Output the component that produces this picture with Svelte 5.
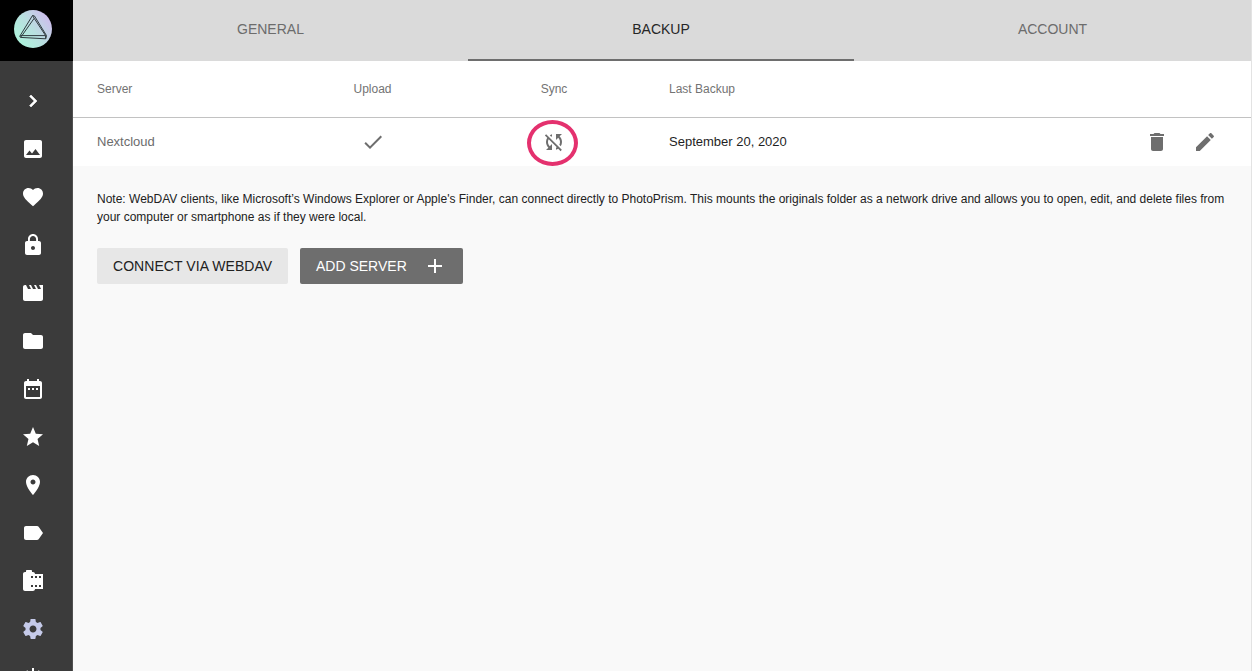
<script>
  const nav = [
    { name: 'expand', bold: true, d: 'M10 6L8.59 7.41 13.17 12l-4.58 4.59L10 18l6-6z' },
    { name: 'photos', d: 'M21 19V5c0-1.1-.9-2-2-2H5c-1.1 0-2 .9-2 2v14c0 1.1.9 2 2 2h14c1.1 0 2-.9 2-2zM8.5 13.5l2.5 3.01L14.500 12l4.500 6H5l3.500-4.500z' },
    { name: 'favorites', d: 'M12 21.350l-1.450-1.320C5.400 15.360 2 12.280 2 8.500 2 5.420 4.420 3 7.500 3c1.740 0 3.410.810 4.500 2.090C13.090 3.810 14.760 3 16.500 3 19.580 3 22 5.420 22 8.500c0 3.780-3.400 6.860-8.550 11.540L12 21.350z' },
    { name: 'private', d: 'M18 8h-1V6c0-2.760-2.240-5-5-5S7 3.240 7 6v2H6c-1.100 0-2 .9-2 2v10c0 1.100.9 2 2 2h12c1.100 0 2-.9 2-2V10c0-1.100-.9-2-2-2zm-6 9c-1.100 0-2-.9-2-2s.9-2 2-2 2 .9 2 2-.9 2-2 2zm3.100-9H8.900V6c0-1.710 1.390-3.100 3.100-3.100s3.100 1.390 3.100 3.100v2z' },
    { name: 'videos', d: 'M18 4l2 4h-3l-2-4h-2l2 4h-3l-2-4H8l2 4H7L5 4H4c-1.100 0-1.990.9-1.990 2L2 18c0 1.100.9 2 2 2h16c1.100 0 2-.9 2-2V4h-4z' },
    { name: 'folders', d: 'M10 4H4c-1.100 0-1.990.9-1.990 2L2 18c0 1.100.9 2 2 2h16c1.100 0 2-.9 2-2V8c0-1.100-.9-2-2-2h-8l-2-2z' },
    { name: 'calendar', d: 'M9 11H7v2h2v-2zm4 0h-2v2h2v-2zm4 0h-2v2h2v-2zm2-7h-1V2h-2v2H8V2H6v2H5c-1.110 0-1.990.9-1.990 2L3 20c0 1.100.890 2 2 2h14c1.100 0 2-.9 2-2V6c0-1.100-.9-2-2-2zm0 16H5V9h14v11z' },
    { name: 'moments', d: 'M12 17.270L18.180 21l-1.640-7.030L22 9.240l-7.190-.610L12 2 9.190 8.630 2 9.240l5.460 4.730L5.820 21z' },
    { name: 'places', d: 'M12 2C8.130 2 5 5.130 5 9c0 5.250 7 13 7 13s7-7.750 7-13c0-3.870-3.130-7-7-7zm0 9.500c-1.380 0-2.500-1.120-2.500-2.500s1.120-2.500 2.500-2.500 2.500 1.120 2.500 2.500-1.120 2.500-2.500 2.500z' },
    { name: 'labels', d: 'M17.630 5.840C17.270 5.330 16.670 5 16 5L5 5.010C3.900 5.010 3 5.900 3 7v10c0 1.100.9 1.990 2 1.990L16 19c.670 0 1.270-.330 1.630-.840L22 12l-4.370-6.160z' },
    { name: 'originals', d: 'M14 5c0-1.100-.9-2-2-2h-1V2c0-.550-.450-1-1-1H6c-.550 0-1 .450-1 1v1H4c-1.100 0-2 .9-2 2v15c0 1.100.9 2 2 2h8c1.100 0 2-.9 2-2h8V5h-8zm-2 13h-2v-2h2v2zm0-9h-2V7h2v2zm4 9h-2v-2h2v2zm0-9h-2V7h2v2zm4 9h-2v-2h2v2zm0-9h-2V7h2v2z' },
    { name: 'settings', active: true, d: 'M19.430 12.980c.040-.320.070-.640.070-.980s-.030-.660-.070-.980l2.110-1.650c.190-.150.240-.420.120-.640l-2-3.460c-.120-.220-.390-.300-.610-.220l-2.490 1c-.520-.400-1.080-.730-1.690-.980l-.380-2.650C14.460 2.180 14.250 2 14 2h-4c-.250 0-.460.180-.490.420l-.380 2.650c-.610.250-1.170.590-1.690.980l-2.490-1c-.230-.090-.490 0-.610.220l-2 3.460c-.130.220-.070.490.120.640l2.110 1.650c-.040.320-.070.650-.070.980s.030.660.070.980l-2.110 1.650c-.190.150-.240.420-.120.640l2 3.460c.120.220.390.300.610.220l2.490-1c.520.400 1.080.730 1.690.980l.380 2.650c.030.240.240.420.490.420h4c.250 0 .460-.180.490-.420l.380-2.650c.610-.250 1.170-.590 1.690-.980l2.490 1c.230.090.490 0 .610-.220l2-3.460c.120-.220.070-.490-.120-.640l-2.110-1.650zM12 15.500c-1.930 0-3.500-1.570-3.500-3.500s1.570-3.500 3.500-3.500 3.500 1.570 3.500 3.500-1.570 3.500-3.500 3.500z' },
    { name: 'logout', d: 'M13 3h-2v10h2V3zm4.830 2.170l-1.420 1.420C17.990 7.860 19 9.810 19 12c0 3.870-3.130 7-7 7s-7-3.130-7-7c0-2.190 1.010-4.140 2.580-5.420L6.170 5.170C4.230 6.820 3 9.260 3 12c0 4.970 4.030 9 9 9s9-4.030 9-9c0-2.740-1.230-5.180-3.170-6.830z' }
  ];
  const icons = {
    check: 'M9 16.170L4.830 12l-1.420 1.410L9 19 21 7l-1.410-1.410z',
    syncOff: 'M10 6.350V4.260c-.8.210-1.550.540-2.230.960l1.460 1.460c.250-.120.500-.240.770-.330zm-7.140-.940l2.360 2.360C4.450 8.990 4 10.440 4 12c0 2.210.910 4.200 2.360 5.640L4 20h6v-6l-2.240 2.240C6.680 15.150 6 13.660 6 12c0-1 .250-1.940.680-2.770l8.080 8.080c-.250.130-.500.250-.770.340v2.090c.8-.210 1.550-.540 2.230-.960l2.360 2.360 1.270-1.270L4.140 4.140 2.860 5.410zM20 4h-6v6l2.240-2.240C17.320 8.850 18 10.340 18 12c0 1-.250 1.940-.680 2.770l1.460 1.460C19.550 15.010 20 13.560 20 12c0-2.210-.910-4.200-2.360-5.640L20 4z',
    trash: 'M6 19c0 1.100.9 2 2 2h8c1.100 0 2-.9 2-2V7H6v12zM19 4h-3.500l-1-1h-5l-1 1H5v2h14V4z',
    edit: 'M3 17.250V21h3.750L17.810 9.940l-3.750-3.750L3 17.250zM20.710 7.040c.390-.390.390-1.020 0-1.410l-2.340-2.340c-.390-.390-1.020-.390-1.410 0l-1.830 1.830 3.750 3.750 1.830-1.830z',
    plus: 'M19 13h-6v6h-2v-6H5v-2h6V5h2v6h6v2z'
  };
</script>

{#snippet icon(d)}
  <svg width="24" height="24" viewBox="0 0 24 24" fill="currentColor"><path {d} /></svg>
{/snippet}

<div class="app">
  <aside>
    <div class="brand">
      <svg width="38" height="38" viewBox="0 0 38 38">
        <defs>
          <linearGradient id="logo" x1="0.1" y1="0.8" x2="0.9" y2="0.2">
            <stop offset="0" stop-color="#aef3dc" />
            <stop offset="0.5" stop-color="#b9dfe0" />
            <stop offset="1" stop-color="#cdbfec" />
          </linearGradient>
        </defs>
        <circle cx="19" cy="19" r="19" fill="url(#logo)" />
        <g fill="none" stroke="#303b40" stroke-width="1" stroke-linejoin="round">
          <path d="M18.500 5.500L5.800 26.200l2.300-.8L20.200 8.300zM20.200 8.300L31.600 25.600H8.100" />
          <path d="M18.500 5.500l1.900.4 12.100 19.700-.8 3.200-25.200-1.400-.7-1.200M31.700 28.800l-.1-3.200M8.100 25.400l-1.600 2" />
        </g>
      </svg>
    </div>
    <nav>
      {#each nav as item (item.name)}
        <div class="item" class:active={item.active} class:bold={item.bold}>{@render icon(item.d)}</div>
      {/each}
    </nav>
  </aside>

  <main>
    <div class="tabs">
      <div class="tab">GENERAL</div>
      <div class="tab current">BACKUP</div>
      <div class="tab">ACCOUNT</div>
    </div>
    <div class="row head">
      <span>Server</span>
      <span class="center">Upload</span>
      <span class="center">Sync</span>
      <span>Last Backup</span>
    </div>
    <div class="row server">
      <span class="name">Nextcloud</span>
      <span class="center">{@render icon(icons.check)}</span>
      <span class="center sync">{@render icon(icons.syncOff)}<span class="ring"></span></span>
      <span class="date">September 20, 2020</span>
      <span class="actions">{@render icon(icons.trash)}{@render icon(icons.edit)}</span>
    </div>
    <p class="note">
      <span>Note: WebDAV clients, like Microsoft’s Windows Explorer or Apple's Finder, can connect directly to PhotoPrism. This mounts the originals folder as a network drive and allows you to open, edit, and delete files from</span>
      <span>your computer or smartphone as if they were local.</span>
    </p>
    <div class="buttons">
      <button class="light">CONNECT VIA WEBDAV</button>
      <button class="dark"><span>ADD SERVER</span>{@render icon(icons.plus)}</button>
    </div>
  </main>
</div>

<style>
  :global(body) { overflow: hidden; }
  .app {
    display: flex;
    width: 1252px;
    height: 671px;
    overflow: hidden;
    font-family: "Liberation Sans", Arial, sans-serif;
    background: #f9f9f9;
  }
  svg { display: block; flex: none; }
  aside { width: 73px; flex: none; background: #3b3b3b; }
  .brand { height: 61px; background: #000; padding: 10px 0 0 14px; box-sizing: border-box; }
  nav { padding-top: 16px; color: #fff; border-right: 1px solid #505050; }
  .item { height: 48px; width: 66px; display: flex; align-items: center; justify-content: center; }
  .active { color: #c5cae9; }
  .bold path { stroke: currentColor; stroke-width: 0.6; }
  main { width: 1179px; box-sizing: border-box; border-right: 1px solid #e3e3e3; }
  .tabs { display: grid; grid-template-columns: 395px 386px 397px; height: 61px; background: #dadada; }
  .tab { display: flex; align-items: center; justify-content: center; height: 57px; padding-bottom: 2px; font-size: 14px; line-height: 16px; color: #6c6c6c; }
  .current { color: #262626; border-bottom: 2px solid #6e6e6e; }
  .row { display: grid; grid-template-columns: 184px 183px 180px 25px 1fr 120px; padding-left: 24px; align-items: center; background: #fff; }
  .row > :nth-child(4) { grid-column: 5; }
  .head { height: 56px; border-bottom: 1px solid #c2c2c2; font-size: 12px; color: #737373; }
  .server { height: 48px; font-size: 13px; color: #1f1f1f; }
  .name { color: #6c6c6c; padding-bottom: 2px; }
  .date { padding-bottom: 2px; }
  .center { display: flex; justify-content: center; color: #6e6e6e; }
  .head .center { color: inherit; }
  .sync { position: relative; }
  .actions { display: flex; justify-content: flex-end; gap: 24px; padding-right: 34px; color: #6e6e6e; }
  .ring { position: absolute; top: 50%; left: 50%; transform: translate(-27px, -22px); width: 51px; height: 46px; box-sizing: border-box; border: 4px solid #e4316e; border-radius: 50%; }
  .note { margin: 0; padding: 24px 0 0 24px; font-size: 12px; line-height: 18px; color: #212121; }
  .note span { display: block; white-space: nowrap; }
  .buttons { display: flex; gap: 12px; padding: 22px 0 0 24px; }
  button { height: 36px; border: 0; border-radius: 2px; padding: 0 16px; display: flex; align-items: center; font: 14px "Liberation Sans", Arial, sans-serif; white-space: nowrap; }
  .light { width: 191px; background: #e7e7e7; color: #212121; letter-spacing: 0.06px; }
  .dark { width: 163px; background: #6e6e6e; color: #fff; justify-content: space-between; }
</style>
